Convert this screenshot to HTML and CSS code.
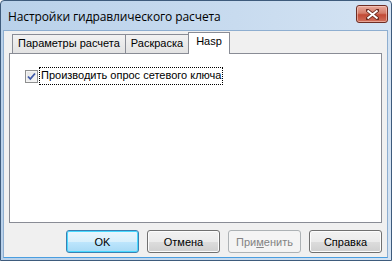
FILE: index.html
```html
<!DOCTYPE html>
<html lang="ru">
<head>
<meta charset="utf-8">
<title>Настройки гидравлического расчета</title>
<link rel="stylesheet" href="styles.css">
</head>
<body>
<div class="window">
  <div class="titlebar">
    <span class="title">Настройки гидравлического расчета</span>
    <button class="close" aria-label="Закрыть">
      <svg width="13" height="11" viewBox="0 0 13 11">
        <path d="M1.5 1.5 L11.5 9.5 M11.5 1.5 L1.5 9.5" stroke="#6b2a20" stroke-width="3.6" stroke-linecap="square"/>
        <path d="M1.5 1.5 L11.5 9.5 M11.5 1.5 L1.5 9.5" stroke="#ffffff" stroke-width="2"/>
      </svg>
    </button>
  </div>
  <div class="client">
    <div class="tabs">
      <div class="tab">Параметры расчета</div>
      <div class="tab">Раскраска</div>
      <div class="tab active">Hasp</div>
    </div>
    <div class="panel">
      <label class="check">
        <span class="box">
          <svg width="9" height="9" viewBox="0 0 9 9">
            <path d="M1 4.5 L3.3 7 L8 1.5" fill="none" stroke="#3d58a8" stroke-width="1.8"/>
          </svg>
        </span>
        <span class="label">Производить опрос сетевого ключа</span>
      </label>
    </div>
    <div class="buttons">
      <div class="btn default">OK</div>
      <div class="btn">Отмена</div>
      <div class="btn disabled">При<u>м</u>енить</div>
      <div class="btn">Справка</div>
    </div>
  </div>
</div>
</body>
</html>
```
FILE: styles.css
```css
html, body {
  margin: 0;
  padding: 0;
}
body {
  width: 392px;
  height: 261px;
  overflow: hidden;
  font-family: "Liberation Sans", Arial, sans-serif;
  font-size: 11px;
  font-weight: 400;
  color: #000;
}
.window {
  box-sizing: border-box;
  width: 392px;
  height: 261px;
  border: 1px solid #3e5b7c;
  border-radius: 4px 4px 0 0;
  background: linear-gradient(90deg, #b9d1ea, #c8dbef 60%, #d4e3f3);
  display: flex;
  flex-direction: column;
  padding: 0 3px 2px 2px;
}
.titlebar {
  height: 29px;
  flex: none;
  display: flex;
  align-items: flex-start;
  justify-content: space-between;
}
.title {
  font-family: "Open Sans", "Noto Sans", sans-serif;
  font-size: 12px;
  margin: 7px 0 0 5px;
  color: #000;
  letter-spacing: -0.1px;
}
.close {
  margin: 4px 0 0 0;
  width: 32px;
  height: 18px;
  padding: 0;
  border: 1px solid #6d2d24;
  border-radius: 3px;
  background: linear-gradient(#e9a99b, #d47d6a 45%, #c24a35 55%, #d0705c);
  display: flex;
  align-items: center;
  justify-content: center;
  box-shadow: inset 0 0 0 1px rgba(255,220,210,0.5);
}
.client {
  flex: 1;
  background: #f0f0f0;
  border: 1px solid #8eaed0;
  border-bottom-color: #4a9ee0;
  display: flex;
  flex-direction: column;
  padding: 1px 5px 0 5px;
}
.tabs {
  display: flex;
  align-items: flex-end;
  padding-left: 3px;
  height: 21px;
  position: relative;
  z-index: 1;
}
.tab {
  box-sizing: border-box;
  height: 19px;
  border: 1px solid #898c95;
  border-bottom: none;
  background: linear-gradient(#f2f2f2, #e3e3e3);
  padding: 2px 5px 0 5px;
  margin-left: -1px;
  white-space: nowrap;
}
.tab:first-child {
  margin-left: 0;
}
.tab.active {
  height: 22px;
  margin-bottom: -1px;
  background: #fff;
  padding: 2px 7px 0 7px;
  margin-left: -1px;
}
.panel {
  box-sizing: border-box;
  height: 170px;
  border: 1px solid #898c95;
  background: #fff;
  padding: 14px 15px 0 15px;
}
.check {
  display: flex;
  align-items: center;
  gap: 2px;
}
.box {
  box-sizing: border-box;
  width: 13px;
  height: 13px;
  border: 1px solid #8e8f8f;
  background: linear-gradient(135deg, #e4e4e4, #f6f6f6);
  box-shadow: inset 0 0 0 1px #f4f4f4;
  display: flex;
  align-items: center;
  justify-content: center;
}
.label {
  outline: 1px dotted #000;
  outline-offset: 0;
  padding: 1px 1px 2px 1px;
  line-height: 13px;
}
.buttons {
  display: flex;
  justify-content: flex-end;
  gap: 8px;
  margin-top: 7px;
}
.btn {
  box-sizing: border-box;
  width: 73px;
  height: 23px;
  display: flex;
  align-items: center;
  justify-content: center;
  color: #000;
  border: 1px solid #707070;
  border-radius: 3px;
  background: linear-gradient(#f2f2f2 0%, #ebebeb 50%, #dddddd 51%, #cfcfcf 100%);
  box-shadow: inset 0 0 0 1px #fcfcfc;
}
.btn.default {
  border-color: #3c7fb1;
  background: linear-gradient(#eaf6fd 0%, #d9f0fc 50%, #bee6fd 51%, #a7d9f5 100%);
  box-shadow: inset 0 0 0 1px #48d9ff;
}
.btn.disabled {
  border-color: #adb2b5;
  background: #f4f4f4;
  box-shadow: none;
  color: #838383;
}
.btn u {
  text-decoration: underline;
}
```
